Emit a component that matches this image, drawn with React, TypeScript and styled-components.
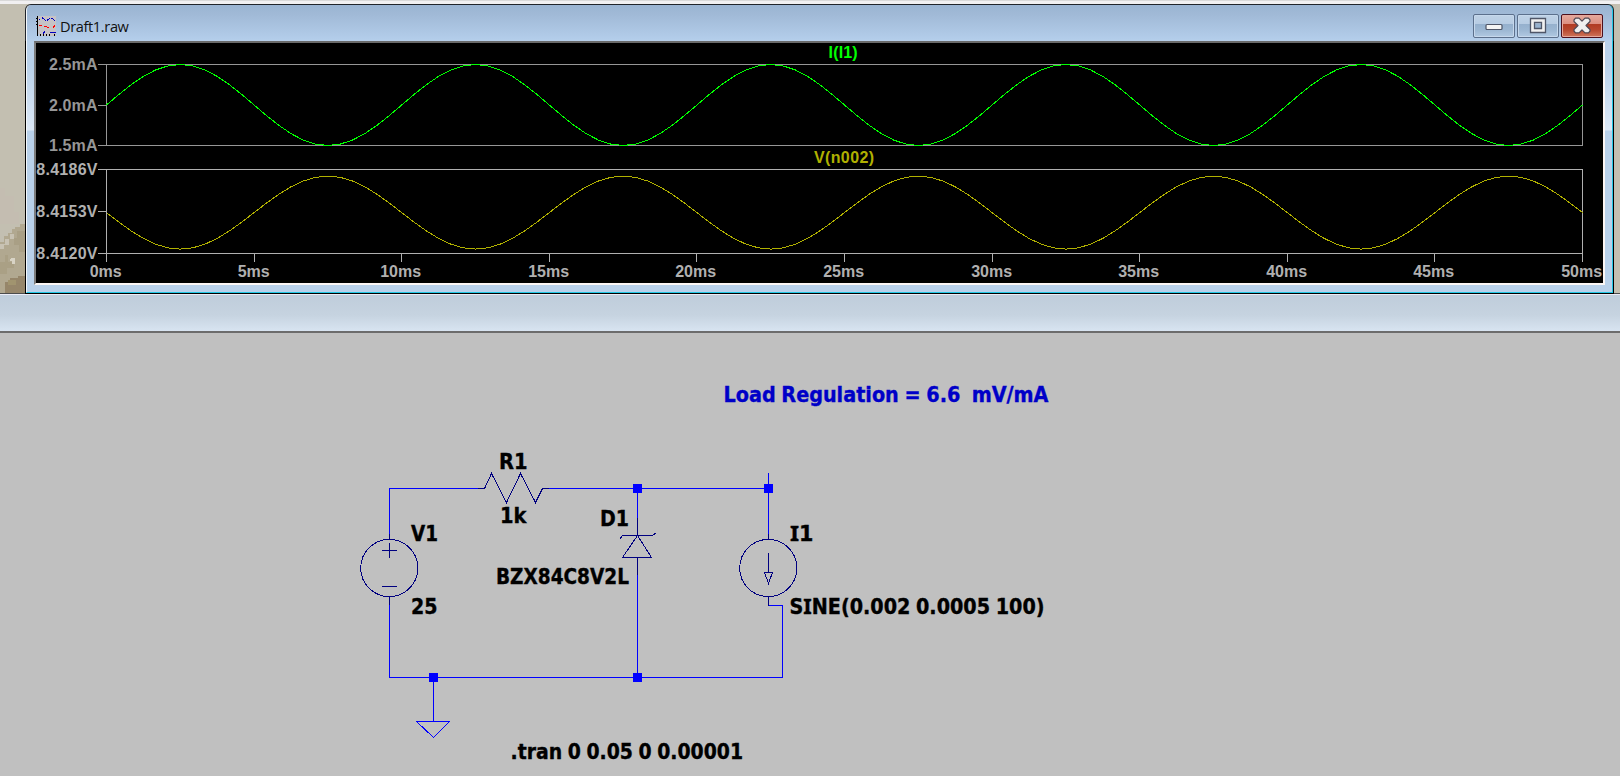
import React from 'react';
import styled, { createGlobalStyle } from 'styled-components';

const GlobalStyle = createGlobalStyle`
  html, body { margin: 0; padding: 0; background: #c0c0c0; overflow: hidden; }
  *, *::before, *::after { box-sizing: border-box; }
`;

const Page = styled.div`
  display: flex;
  flex-direction: column;
  width: 1620px;
  height: 776px;
  overflow: hidden;
  background: #c0c0c0;
`;

const ToolbarEdge = styled.div`
  flex: none;
  height: 4px;
  background: linear-gradient(#d9d9d9 0 1px, #f1f0f1 1px 4px);
`;

const Desktop = styled.div`
  flex: none;
  display: flex;
  height: 290px;
  background: linear-gradient(#c3bfb1 0 289px, #4c4c4c 289px);
`;

const Wallpaper = styled.svg`
  flex: none;
  display: block;
  width: 25px;
  height: 289px;
`;

const WaveWindow = styled.section`
  display: flex;
  flex-direction: column;
  width: 1589px;
  height: 290px;
  padding: 1px 1px 1px 1px;
  background: linear-gradient(#20242a 0 37px, #000 37px);
  border-radius: 6px 6px 0 0;
`;

const Frame = styled.div`
  flex: 1;
  display: flex;
  flex-direction: column;
  padding: 0 7px 7px 7px;
  border: 1px solid #f4f8fc;
  border-top: 0;
  border-right-color: #22c8e6;
  border-bottom-color: #22c8e6;
  border-radius: 5px 5px 0 0;
  background:
    linear-gradient(#9ab4d2, #a1bad7 10px, #b3cdea 34px, #b9d1ea 37px, #b9d1ea 60px, #dce8f6 123px, #dce8f6 125px, #b9d1ea 126px);
`;

const TitleBar = styled.header`
  display: flex;
  align-items: flex-start;
  height: 36px;
  padding: 9px 2px 0 2px;
`;

const WaveIcon = styled.svg`
  width: 20px;
  height: 20px;
  margin-top: 2px;
`;

const Title = styled.h1`
  flex: 1;
  margin: 0 0 0 4px;
  font: 400 14.6px/24px "Open Sans", "Noto Sans", sans-serif;
  letter-spacing: -0.38px;
  color: #111;
`;

const Controls = styled.div`
  display: flex;
  gap: 2px;
`;

const ControlButton = styled.button<{ $danger?: boolean }>`
  display: flex;
  align-items: center;
  justify-content: center;
  width: 42px;
  height: 24px;
  padding: 0;
  border: 1px solid ${p => (p.$danger ? '#4d101c' : '#5c708c')};
  border-radius: 2px;
  box-shadow: inset 0 0 0 1px ${p => (p.$danger ? '#e5a79c' : '#c6d8ec')};
  background: ${p =>
    p.$danger
      ? 'linear-gradient(#e6a99d 0, #dc8e80 9px, #b03a22 9px, #b8482f 15px, #d27c62 23px)'
      : 'linear-gradient(#bfd2e6 0, #b7cce3 9px, #95b0cd 9px, #9cb7d3 15px, #b4cce4 23px)'};
`;

const PlotArea = styled.div`
  flex: 1;
  border: 2px solid;
  border-color: #6b6b6b #fbf6f4 #fbf6f4 #7c7c7c;
  background: #000;
`;

const PlotSvg = styled.svg`
  display: block;
  width: 1567px;
  height: 240px;
  font: 700 16px "Liberation Sans", Arial, sans-serif;
`;

const SchematicTitle = styled.div`
  flex: none;
  height: 39px;
  border-top: 1px solid #ececf6;
  border-bottom: 2px solid #6c6c6c;
  background: linear-gradient(#bfcddb, #c6d3e0 20px, #d8e4f1 36px);
`;

const Schematic = styled.main`
  flex: 1;
  background: #c0c0c0;
`;

const SchematicSvg = styled.svg`
  display: block;
  width: 1620px;
  height: 443px;
`;

const SchematicText = styled.text<{ $note?: boolean }>`
  font: 700 21.6px "DejaVu Sans Condensed", "DejaVu Sans", sans-serif;
  font-stretch: condensed;
  white-space: pre;
  word-spacing: -1px;
  fill: ${p => (p.$note ? '#0000c8' : '#000')};
  stroke: ${p => (p.$note ? '#0000c8' : '#000')};
  stroke-width: 0.35px;
`;

const SerifedI = styled.tspan`
  font-family: "Noto Sans", sans-serif;
  font-size: 22px;
`;

const PLOT = { left: 106.5, right: 1582.5 };

/** Samples a sine trace coarsely so that it shows straight segments. */
function trace(center: number, amplitude: number): string {
  const samples = 120;
  return Array.from({ length: samples + 1 }, (_, i) => {
    const x = PLOT.left + ((PLOT.right - PLOT.left) * i) / samples;
    const y = center - amplitude * Math.sin((i / samples) * 10 * Math.PI);
    return `${x.toFixed(1)},${y.toFixed(2)}`;
  }).join(' ');
}

interface PaneProps {
  top: number;
  bottom: number;
  color: string;
  labels: { text: string; width: number }[];
}

function Pane({ top, bottom, color, labels }: PaneProps) {
  const step = (bottom - top) / 2;
  return (
    <g>
      <rect x={PLOT.left} y={top} width={PLOT.right - PLOT.left} height={bottom - top} fill="none" stroke={color} shapeRendering="crispEdges" />
      {labels.map((label, i) => {
        const y = Math.floor(top + step * i) + 0.5;
        return (
          <g key={label.text}>
            <path d={`M98 ${y}H106`} stroke={color} shapeRendering="crispEdges" />
            <text x={97.5 - label.width} y={y + 5.5} textLength={label.width} fill={color}>{label.text}</text>
          </g>
        );
      })}
    </g>
  );
}

const TIMES = [0, 5, 10, 15, 20, 25, 30, 35, 40, 45, 50];

function Plots() {
  return (
    <PlotSvg viewBox="36 43 1567 240">
      <Pane
        top={64.5}
        bottom={145.5}
        color="#969696"
        labels={['2.5mA', '2.0mA', '1.5mA'].map(text => ({ text, width: 48.5 }))}
      />
      <Pane
        top={169.5}
        bottom={253.5}
        color="#b0b0b0"
        labels={['8.4186V', '8.4153V', '8.4120V'].map(text => ({ text, width: 61.2 }))}
      />
      {TIMES.map((t, i) => {
        const x = Math.floor(PLOT.left + i * 147.6) + 0.5;
        const width = t < 10 ? 32 : 41;
        return (
          <g key={t}>
            <path d={`M${x} 254V262`} stroke="#b0b0b0" shapeRendering="crispEdges" />
            <text x={x - width / 2 - 0.8} y="277" textLength={width} fill="#b0b0b0">{t}ms</text>
          </g>
        );
      })}
      <text x="828.6" y="58" textLength="29" fill="#00ff00">I(I1)</text>
      <text x="814" y="163" textLength="60" fill="#b0b000">V(n002)</text>
      <polyline points={trace(105, 40.5)} fill="none" stroke="#00ff00" shapeRendering="crispEdges" />
      <polyline points={trace(212.6, -36.5)} fill="none" stroke="#b0b000" shapeRendering="crispEdges" />
    </PlotSvg>
  );
}

const LABELS: { x: number; y: number; width: number; text: string; note?: boolean }[] = [
  { x: 723.5, y: 401.5, width: 325, text: 'Load Regulation = 6.6\u00a0 mV/mA', note: true },
  { x: 499, y: 469, width: 28.5, text: 'R1' },
  { x: 500, y: 523, width: 26.5, text: '1k' },
  { x: 411, y: 541, width: 27, text: 'V1' },
  { x: 411, y: 614, width: 26.5, text: '25' },
  { x: 600, y: 526, width: 29, text: 'D1' },
  { x: 496, y: 584, width: 133, text: 'BZX84C8V2L' },
  { x: 790, y: 541, width: 23.5, text: 'I1' },
  { x: 789.5, y: 614, width: 255, text: 'SINE(0.002 0.0005 100)' },
  { x: 510.5, y: 759, width: 232.5, text: '.tran 0 0.05 0 0.00001' },
];

const JUNCTIONS: [number, number][] = [[637, 488], [768, 488], [433, 677], [637, 677]];

function withSerifedI(text: string) {
  return text.split(/(I)/).filter(Boolean).map((part, i) => (part === 'I' ? <SerifedI key={i}>I</SerifedI> : part));
}

function Circuit() {
  return (
    <SchematicSvg viewBox="0 333 1620 443">
      <g fill="none" stroke="#0000ff" shapeRendering="crispEdges" strokeWidth="1">
        <path d="M389.5 534V488.5H478M549 488.5H768.5M389.5 605V677.5H782.5V605.5H768M768.5 473V534M637.5 488V518M637.5 575V677M433.5 677V721" />
        <path d="M416.5 721.5H449.5L433.5 737.5Z" />
      </g>
      <g fill="none" stroke="#000080" shapeRendering="crispEdges">
        <path d="M478 488.5H484.5L491.5 473.5L506.5 502.5L520.5 473.5L535.5 502.5L542.5 488.5H549" />
        <path d="M389.5 534V539M389.5 597V605M382 550.5H397M389.5 543V558M382 586.5H397" />
        <circle cx="389.3" cy="568" r="28.6" />
        <path d="M637.5 518V535M637.5 557V575M619.5 539.5L622.5 535.5H652.5L656.5 532.5M637.5 535.5L622.5 557.5H651.5Z" />
        <path d="M768.5 534V539M768.5 597V606M768.5 553V572M764.5 572.5H772.5L768.5 583.5Z" />
        <circle cx="768.3" cy="568" r="28.6" />
      </g>
      {JUNCTIONS.map(([x, y]) => (
        <rect key={`${x}-${y}`} x={x - 4} y={y - 4} width="9" height="9" fill="#0000ff" />
      ))}
      {LABELS.map(l => (
        <SchematicText key={l.text} x={l.x} y={l.y} textLength={l.width} lengthAdjust="spacingAndGlyphs" $note={l.note}>
          {withSerifedI(l.text)}
        </SchematicText>
      ))}
    </SchematicSvg>
  );
}

export default function App() {
  return (
    <>
      <GlobalStyle />
      <Page>
        <ToolbarEdge />
        <Desktop>
          <Wallpaper viewBox="0 4 25 289" aria-hidden="true" shapeRendering="crispEdges">
            <path d="M0 188H5V196H14V212H19V224H0Z" fill="#c4bdb1" />
            <path d="M25 224H20V227H15V229H12V233H8V236H4V242H0V294H25Z" fill="#b1a890" />
            <path d="M0 244H5V239H10V234H14V239H9V245H4V249H0Z" fill="#c8c2b3" />
            <path d="M17 231H25V252H19V245H14V238H17Z" fill="#a99f85" />
            <path d="M5 255H8V262H14V268H7V274H0V262H5Z" fill="#aaa085" />
            <path d="M11 258H15V264H12V261H10Z" fill="#d8d3c5" />
            <path d="M25 276H18V278H10V282H5V294H25Z" fill="#96866a" />
            <path d="M8 280H16V285H8Z" fill="#a1946f" />
          </Wallpaper>
          <WaveWindow>
            <Frame>
              <TitleBar>
                <WaveIcon viewBox="0 0 20 20" aria-hidden="true" shapeRendering="crispEdges">
                  <rect x="1" width="19" height="18" fill="#c6c3c6" />
                  <rect x="3" y="18" width="17" height="2" fill="#c6c3c6" />
                  <path d="M0 2.5H1M0 5.5H1M0 8.5H1M1.5 0V20M4.5 18V20M7.5 18V20M10.5 18V20M13.5 18V20M18.5 18V20" stroke="#000" fill="none" />
                  <path d="M3 3.5H4M6 1.5L10.5 5.5M11 4.5L14 2M15 2.5H17M17 3L19 5M7 17.5L9 15.5M14 16.5H20" stroke="#0000c0" fill="none" />
                  <path d="M3 9.5H6M8 10.5H11M11 11.5H13M17 11.5L19 9.5" stroke="#f00" fill="none" />
                </WaveIcon>
                <Title>Draft1.raw</Title>
                <Controls>
                  <ControlButton aria-label="Minimize">
                    <svg width="18" height="18" viewBox="0 0 18 18">
                      <rect x="1" y="7.5" width="16" height="5" rx="1" fill="#f4f4f4" stroke="#4f5668" strokeWidth="1.2" />
                    </svg>
                  </ControlButton>
                  <ControlButton aria-label="Maximize">
                    <svg width="18" height="18" viewBox="0 0 18 18">
                      <path d="M1.5 1.5H16.5V15.5H1.5ZM5.5 5.5V11.5H12.5V5.5Z" fillRule="evenodd" fill="#f0f0f0" stroke="#4f5668" strokeWidth="1.3" />
                    </svg>
                  </ControlButton>
                  <ControlButton $danger aria-label="Close">
                    <svg width="18" height="18" viewBox="0 0 18 18">
                      <path d="M2.5 1.2H6L9 4.2L12 1.2H15.5L17 3V4.5L13 8.5L17 12.5V14L15.5 15.8H12L9 12.8L6 15.8H2.5L1 14V12.5L5 8.5L1 4.5V3Z" fill="#f0f0f0" stroke="#4f4854" strokeWidth="1.2" strokeLinejoin="round" />
                    </svg>
                  </ControlButton>
                </Controls>
              </TitleBar>
              <PlotArea>
                <Plots />
              </PlotArea>
            </Frame>
          </WaveWindow>
        </Desktop>
        <SchematicTitle />
        <Schematic>
          <Circuit />
        </Schematic>
      </Page>
    </>
  );
}
